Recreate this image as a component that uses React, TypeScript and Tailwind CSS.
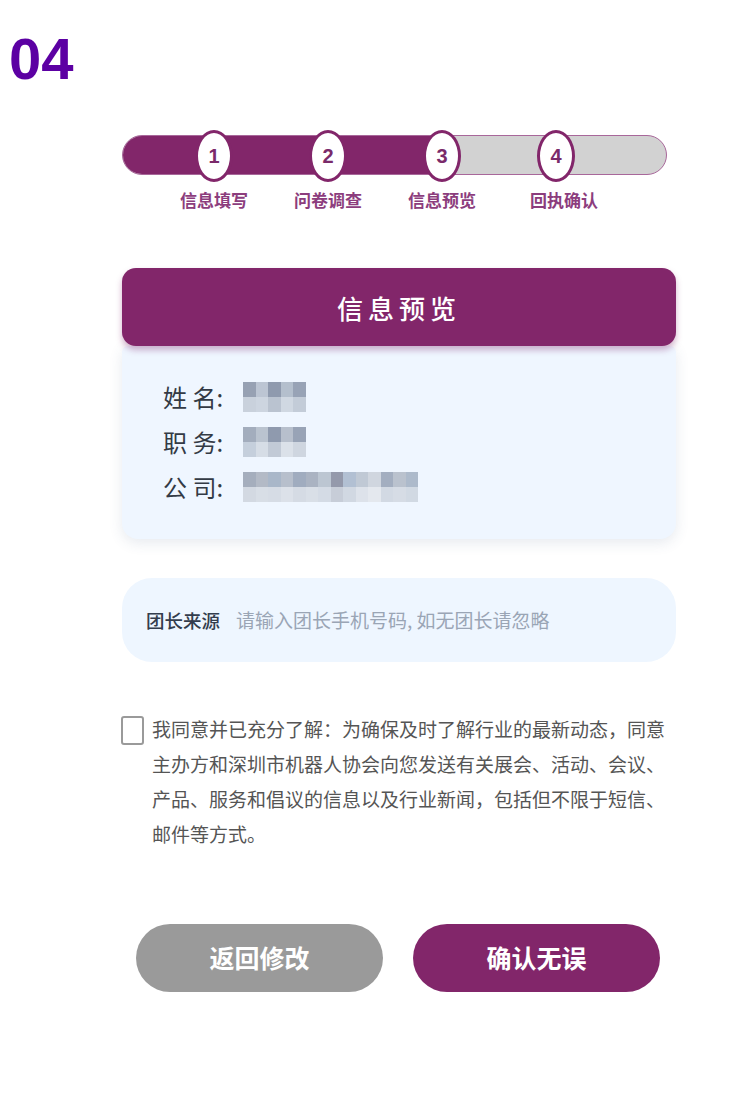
import React from "react";

const PURPLE = "#82266a";

const STEPS = ["信息填写", "问卷调查", "信息预览", "回执确认"];

const INFO_ROWS = [
  {
    label: "姓 名:",
    top: ["#97a1b3", "#bcc5d3", "#8f9aae", "#b4bfcd", "#98a3b6"],
    bottom: ["#c9d1dc", "#cdd5e0", "#bac3d0", "#d0d8e2", "#c3ccd8"],
  },
  {
    label: "职 务:",
    top: ["#a3adbd", "#bac3cf", "#8f9aae", "#b7bfcc", "#98a3b6"],
    bottom: ["#c5cfdc", "#d6dde6", "#c2cad6", "#dbe1e9", "#cfd6e0"],
  },
  {
    label: "公 司:",
    top: [
      "#a5aebd", "#b3bac6", "#a9b7c9", "#b7bfcc", "#a0acbf", "#aab3c2", "#bcc6d2",
      "#9499ab", "#b2c0d3", "#c0c9d5", "#d0d6df", "#a3aec0", "#bac2ce", "#adbacb",
    ],
    bottom: [
      "#d3d9e2", "#d8dee6", "#d6dce5", "#dce1e9", "#d5dbe4", "#d9dfe7", "#d4dbe5",
      "#c7cdd8", "#d1d8e2", "#dde2ea", "#e4e8ee", "#d2d9e3", "#d6dce5", "#d1d9e3",
    ],
  },
];

function Mosaic({ top, bottom }: { top: string[]; bottom: string[] }) {
  return (
    <div className="flex flex-col blur-[0.6px]">
      <div className="flex">
        {top.map((c, i) => (
          <div key={i} className="w-[12.5px] h-[15px]" style={{ backgroundColor: c }} />
        ))}
      </div>
      <div className="flex">
        {bottom.map((c, i) => (
          <div key={i} className="w-[12.5px] h-[15px]" style={{ backgroundColor: c }} />
        ))}
      </div>
    </div>
  );
}

function Progress() {
  return (
    <div className="ml-[122px] w-[545px]">
      <div className="relative h-[52px]">
        <div className="absolute inset-x-0 top-[5px] h-[40px] rounded-full bg-[#d2d2d2] border border-[#a8679a] overflow-hidden">
          <div className="h-full w-[322px] bg-[#82266a]" />
        </div>
        <div className="relative flex pl-[35px]">
          {STEPS.map((s, i) => (
            <div key={s} className="w-[114px] flex justify-center">
              <div className="w-[38px] h-[52px] rounded-[50%] bg-white border-[3px] border-[#82266a] flex items-center justify-center text-[20px] font-bold text-[#7a2a6a] font-['Liberation_Sans',sans-serif]">
                {i + 1}
              </div>
            </div>
          ))}
        </div>
      </div>
      <div className="flex pl-[35px] mt-[6px]">
        {STEPS.map((s, i) => (
          <div
            key={s}
            className={
              i === 3
                ? "w-[114px] pl-[16px] text-center text-[17px] leading-[24px] font-bold text-[#8c3d7d]"
                : "w-[114px] text-center text-[17px] leading-[24px] font-bold text-[#8c3d7d]"
            }
          >
            {s}
          </div>
        ))}
      </div>
    </div>
  );
}

export default function App() {
  return (
    <div className="min-h-screen w-[740px] bg-white pb-[100px] font-['Noto_Sans_CJK_SC','Noto_Sans',sans-serif]">
      <div className="pt-[30px] pl-[9px] text-[58px] leading-[58px] font-bold text-[#5c00a3] font-['Liberation_Sans',sans-serif]">
        04
      </div>

      <div className="mt-[42px]">
        <Progress />
      </div>

      <div className="ml-[122px] w-[554px] mt-[56px]">
        <div
          className="relative z-10 h-[78px] rounded-[14px] flex items-center justify-center text-white text-[26px] font-medium tracking-[5px] shadow-[0_4px_6px_rgba(130,38,106,0.35)]"
          style={{ backgroundColor: PURPLE }}
        >
          信息预览
        </div>
        <div className="bg-[#eff6ff] rounded-b-[16px] rounded-t-[6px] shadow-[0_4px_14px_rgba(60,80,120,0.12)] pt-[28px] pb-[30px] pl-[41px]">
          {INFO_ROWS.map((r) => (
            <div key={r.label} className="h-[45px] flex items-center">
              <span className="text-[24px] text-[#333a45] w-[80px] whitespace-pre">{r.label}</span>
              <Mosaic top={r.top} bottom={r.bottom} />
            </div>
          ))}
        </div>

        <div className="mt-[39px] h-[84px] rounded-[30px] bg-[#eef6ff] flex items-center pl-[24px]">
          <span className="text-[18.5px] font-medium text-[#333d4d] mt-[2px]">团长来源</span>
          <span className="ml-[16px] text-[19px] text-[#9aa5b5]">请输入团长手机号码, 如无团长请忽略</span>
        </div>
      </div>

      <div className="ml-[121px] mt-[49px] flex items-start">
        <div className="mt-[5px] w-[23px] h-[29px] border-2 border-[#9a9a9a] rounded-[3px] bg-white shrink-0" />
        <p className="ml-[8px] text-[19px] leading-[35px] text-[#555555] whitespace-nowrap">
          我同意并已充分了解：为确保及时了解行业的最新动态，同意
          <br />
          主办方和深圳市机器人协会向您发送有关展会、活动、会议、
          <br />
          产品、服务和倡议的信息以及行业新闻，包括但不限于短信、
          <br />
          邮件等方式。
        </p>
      </div>

      <div className="ml-[136px] mt-[73px] flex gap-[30px]">
        <button className="w-[247px] h-[68px] rounded-full bg-[#9a9a9a] text-white text-[25px] font-bold">
          返回修改
        </button>
        <button
          className="w-[247px] h-[68px] rounded-full text-white text-[25px] font-bold"
          style={{ backgroundColor: PURPLE }}
        >
          确认无误
        </button>
      </div>
    </div>
  );
}
